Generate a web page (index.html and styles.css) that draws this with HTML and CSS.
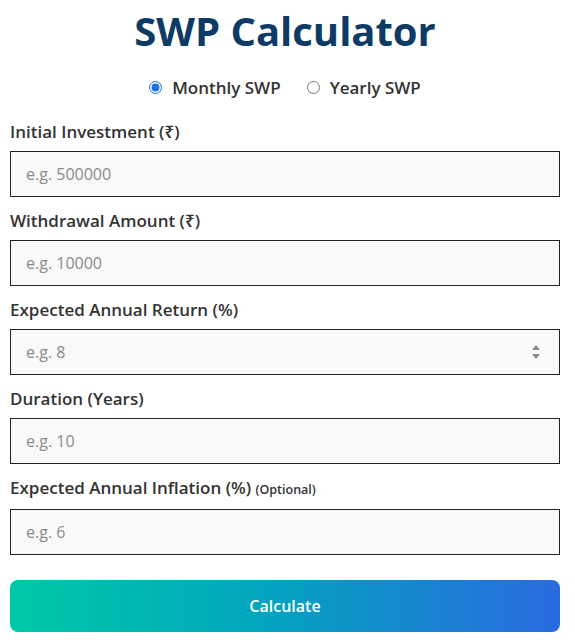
FILE: index.html
```html
<!DOCTYPE html>
<html>
<head>
<meta charset="utf-8">
<link rel="stylesheet" href="styles.css">
</head>
<body>
<div class="calc">
  <h1 class="title">SWP Calculator</h1>
  <div class="modes">
    <label class="mode"><input type="radio" name="mode" checked> Monthly SWP</label>
    <label class="mode"><input type="radio" name="mode"> Yearly SWP</label>
  </div>
  <div class="fields">
    <div class="field">
      <label class="lbl">Initial Investment (₹)</label>
      <input class="inp" type="text" placeholder="e.g. 500000">
    </div>
    <div class="field">
      <label class="lbl">Withdrawal Amount (₹)</label>
      <input class="inp" type="text" placeholder="e.g. 10000">
    </div>
    <div class="field">
      <label class="lbl">Expected Annual Return (%)</label>
      <div class="spinwrap">
        <input class="inp" type="text" placeholder="e.g. 8">
        <span class="spin"><span class="up"></span><span class="down"></span></span>
      </div>
    </div>
    <div class="field">
      <label class="lbl">Duration (Years)</label>
      <input class="inp" type="text" placeholder="e.g. 10">
    </div>
    <div class="field">
      <label class="lbl">Expected Annual Inflation (%) <small class="opt">(Optional)</small></label>
      <input class="inp" type="text" placeholder="e.g. 6">
    </div>
  </div>
  <button class="btn">Calculate</button>
</div>
</body>
</html>
```
FILE: styles.css
```css
html, body { margin: 0; padding: 0; background: #fff; }
body { font-family: "Open Sans", "Noto Sans", sans-serif; color: #333; }
.calc { width: 550px; padding: 0 15px 0 10px; }
.title { margin: 6px 0 0; text-align: center; font-size: 40px; font-weight: 700; color: #0d3b66; line-height: 50px; }
.modes { display: flex; justify-content: center; gap: 26px; margin-top: 19px; height: 24px; align-items: center; }
.mode { display: flex; align-items: center; gap: 8px; font-size: 17px; font-weight: 600; color: #333; }
.mode input { margin: 0 2px 0 0; width: 13px; height: 13px; accent-color: #1a73e8; }
.fields { display: flex; flex-direction: column; gap: 10px; margin-top: 19px; }
.lbl { display: block; font-size: 17px; font-weight: 600; color: #333; line-height: 24px; padding-top: 2px; margin-bottom: 7px; }
.opt { font-size: 12.5px; font-weight: 600; }
.inp { display: block; box-sizing: border-box; width: 100%; height: 46px; border: 1px solid #222; background: #f9f9f9; font-family: inherit; font-size: 16px; padding: 0 15px; color: #333; border-radius: 0; outline: none; }
.inp::placeholder { color: #8a8a8a; }
.spinwrap { position: relative; }
.spin { position: absolute; right: 20px; top: 16px; display: flex; flex-direction: column; gap: 4px; }
.up { width: 0; height: 0; border-left: 4px solid transparent; border-right: 4px solid transparent; border-bottom: 5px solid #8a8a8a; }
.down { width: 0; height: 0; border-left: 4px solid transparent; border-right: 4px solid transparent; border-top: 5px solid #8a8a8a; }
.btn { display: block; width: 100%; height: 52px; margin-top: 25px; border: none; border-radius: 8px; background: linear-gradient(90deg, #00c9a7 0%, #00a6bd 45%, #2a6ae0 100%); color: #fff; font-family: inherit; font-size: 16px; font-weight: 600; }
```
